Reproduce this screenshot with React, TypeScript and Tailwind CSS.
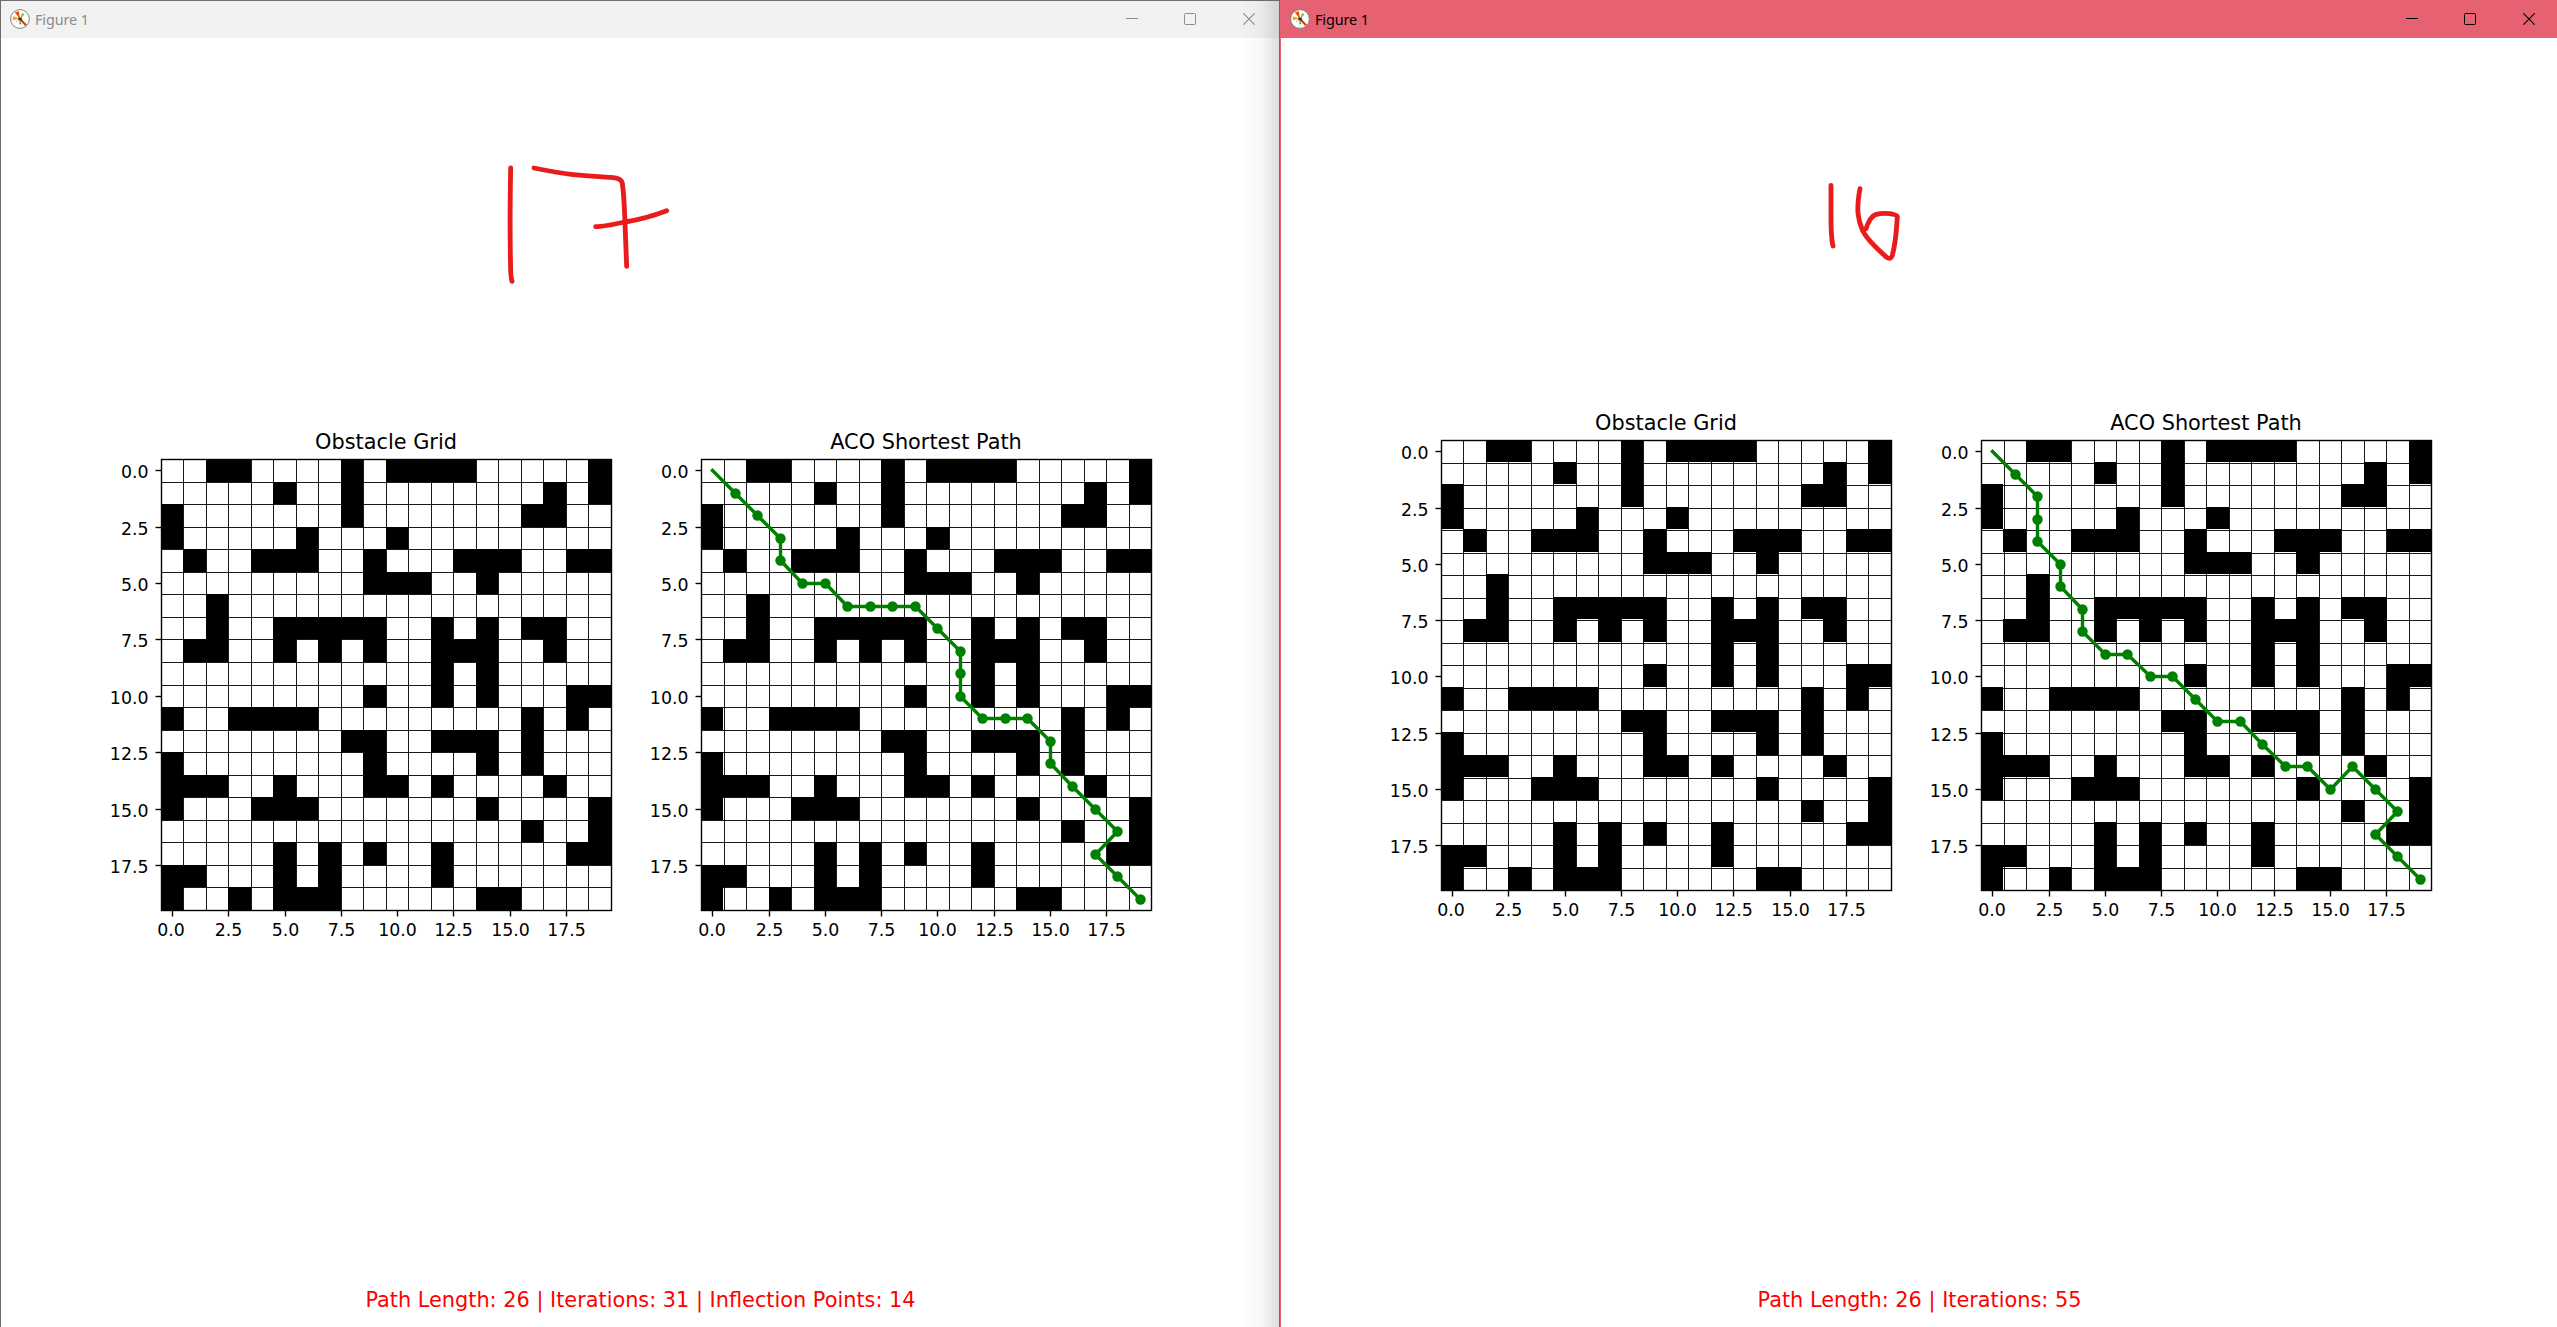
const OBSTACLES: number[][] = [
  [2, 3, 8, 10, 11, 12, 13, 19],
  [5, 8, 17, 19],
  [0, 8, 16, 17],
  [0, 6, 10],
  [1, 4, 5, 6, 9, 13, 14, 15, 18, 19],
  [9, 10, 11, 14],
  [2],
  [2, 5, 6, 7, 8, 9, 12, 14, 16, 17],
  [1, 2, 5, 7, 9, 12, 13, 14, 17],
  [12, 14],
  [9, 12, 14, 18, 19],
  [0, 3, 4, 5, 6, 16, 18],
  [8, 9, 12, 13, 14, 16],
  [0, 9, 14, 16],
  [0, 1, 2, 5, 9, 10, 12, 17],
  [0, 4, 5, 6, 14, 19],
  [16, 19],
  [5, 7, 9, 12, 18, 19],
  [0, 1, 5, 7, 12],
  [0, 3, 5, 6, 7, 14, 15],
];

type Point = [number, number];
type Scale = { base: number; step: number };

const PATH_31: Point[] = [
  [0, 0], [1, 1], [2, 2], [3, 3], [3, 4], [4, 5], [5, 5], [6, 6], [7, 6], [8, 6], [9, 6], [10, 7], [11, 8],
  [11, 9], [11, 10], [12, 11], [13, 11], [14, 11], [15, 12], [15, 13], [16, 14], [17, 15], [18, 16], [17, 17],
  [18, 18], [19, 19],
];
const PATH_55: Point[] = [
  [0, 0], [1, 1], [2, 2], [2, 3], [2, 4], [3, 5], [3, 6], [4, 7], [4, 8], [5, 9], [6, 9], [7, 10], [8, 10],
  [9, 11], [10, 12], [11, 12], [12, 13], [13, 14], [14, 14], [15, 15], [16, 14], [17, 15], [18, 16], [17, 17],
  [18, 18], [19, 19],
];

const TICKS = [0, 2.5, 5, 7.5, 10, 12.5, 15, 17.5];
const EDGES = Array.from({ length: 21 }, (_, i) => i);

// Pixel index of grid position k, snapped down to a whole pixel.
const snap = (s: Scale, k: number) => Math.floor(s.base + s.step * k);

const X_GRID: Scale = { base: 61.25, step: 22.5 };
const X_PATH: Scale = { base: 61.5, step: 22.5 };
const X_PATH_CELLS: Scale = { base: 61.4, step: 22.535 };
const Y_LEFT: Scale = { base: 39.5, step: 22.55 };
const Y_RIGHT: Scale = { base: 40.5, step: 22.5 };
const Y_RIGHT_CELLS: Scale = { base: 39.5, step: 22.545 };

function Axes({
  title, xs, ys, cellXs = xs, cellYs = ys, path, titleY, zeroX,
}: {
  title: string; xs: Scale; ys: Scale; cellXs?: Scale; cellYs?: Scale; path?: Point[]; titleY: number; zeroX: number;
}) {
  const l = snap(xs, 0) + 0.5;
  const r = snap(xs, 20) + 0.5;
  const t = snap(ys, 0) + 0.5;
  const b = snap(ys, 20) + 0.5;
  const px = (v: number) => snap(xs, v + 0.5) + 0.5;
  const py = (v: number) => snap(ys, v + 0.5) + 0.5;
  return (
    <svg width="540" height="540" viewBox="0 0 540 540" className="shrink-0 font-['DejaVu_Sans',sans-serif]">
      <g shapeRendering="crispEdges">
        {OBSTACLES.flatMap((cols, row) =>
          cols.map((c) => {
            const x = snap(cellXs, c);
            const y = Math.max(snap(cellYs, row), Math.floor(t));
            const x2 = Math.min(snap(cellXs, c + 1), r);
            const y2 = Math.min(snap(cellYs, row + 1), b);
            return <rect key={`${row}-${c}`} x={x} y={y} width={x2 - x} height={y2 - y} fill="#000" />;
          }),
        )}
      </g>
      <g stroke="#000" strokeWidth="1" strokeOpacity="0.9">
        {EDGES.map((k) => (
          <line key={`v${k}`} x1={snap(xs, k) + 0.5} x2={snap(xs, k) + 0.5} y1={t} y2={b} />
        ))}
        {EDGES.map((k) => (
          <line key={`h${k}`} y1={snap(ys, k) + 0.5} y2={snap(ys, k) + 0.5} x1={l} x2={r} />
        ))}
      </g>
      {path && (
        <g>
          <polyline
            points={path.map(([x, y]) => `${px(x)},${py(y)}`).join(" ")}
            fill="none" stroke="#008000" strokeWidth="3.4" strokeLinejoin="round" strokeLinecap="square"
          />
          {path.slice(1).map(([x, y], i) => (
            <circle key={i} cx={px(x)} cy={py(y)} r="5.2" fill="#008000" />
          ))}
        </g>
      )}
      <rect x={l} y={t} width={r - l} height={b - t} fill="none" stroke="#000" strokeWidth="1.4" />
      <g stroke="#000" strokeWidth="1.4">
        {TICKS.map((v) => (
          <line key={`x${v}`} x1={px(v)} x2={px(v)} y1={b} y2={b + 6} />
        ))}
        {TICKS.map((v) => (
          <line key={`y${v}`} y1={py(v)} y2={py(v)} x1={l - 6} x2={l} />
        ))}
      </g>
      <g fontSize="17.36">
        {TICKS.map((v) => (
          <text key={`xl${v}`} x={v === 0 ? zeroX : px(v)} y="516" textAnchor="middle">{v.toFixed(1)}</text>
        ))}
        {TICKS.map((v) => (
          <text key={`yl${v}`} x="48.5" y={py(v) + 7} textAnchor="end">{v.toFixed(1)}</text>
        ))}
      </g>
      <text x="286" y={titleY} fontSize="20.83" textAnchor="middle">{title}</text>
    </svg>
  );
}

function AppIcon() {
  return (
    <svg width="20" height="20" viewBox="0 0 20 20" className="shrink-0">
      <circle cx="10" cy="10" r="9.4" fill="#fff" stroke="#777" strokeWidth="0.9" />
      <path d="M10 10 4.8 3.4 8.8 1.9Z" fill="#e8530e" />
      <path d="M9.6 9.8 2.6 11.2 3 7.4 5.6 8Z" fill="#f5a800" />
      <path d="M10 10 11.8 4.6 14.2 4.2 13.6 6.6Z" fill="#8fc31f" />
      <path d="M10 10 9 15.2 11.4 15.2Z" fill="#4caf50" />
      <path d="M10 10 5.4 12.4 6.8 13.6Z" fill="#d6c9a0" />
      <path d="m10 10 6 6.3" stroke="#c2410c" strokeWidth="2" />
      <path d="m8.6 8.6 3 3M11.6 8.8l-3.2 2" stroke="#2d2d2d" strokeWidth="1.4" />
    </svg>
  );
}

function TitleBar({ active }: { active?: boolean }) {
  return (
    <div
      className={
        active
          ? "flex h-[38px] shrink-0 items-center bg-[#e66172] pl-[10px] text-black"
          : "flex h-[37px] shrink-0 items-center bg-[#f2f2f2] pb-px pl-[9px] text-[#8c8c8c]"
      }
    >
      <AppIcon />
      <span className="ml-[5px] pt-px font-['Noto_Sans',sans-serif] text-[14.4px] leading-5 tracking-[-0.1px]">Figure 1</span>
      <div className={active ? "-mr-[2px] ml-auto flex" : "ml-auto flex"}>
        <span className="flex w-[58px] justify-center">
          <svg width="12" height="12" viewBox="0 0 12 12"><path d="M0 5.5h12" stroke="currentColor" /></svg>
        </span>
        <span className="flex w-[58px] justify-center">
          <svg width="12" height="12" viewBox="0 0 12 12">
            <rect x="0.5" y="0.5" width="11" height="11" rx="1" fill="none" stroke="currentColor" />
          </svg>
        </span>
        <span className="flex w-[60px] justify-center">
          <svg width="12" height="12" viewBox="0 0 12 12">
            <path d="m.3.3 11.4 11.4M11.7.3.3 11.7" stroke="currentColor" strokeWidth="1.1" />
          </svg>
        </span>
      </div>
    </div>
  );
}

function Status({ children }: { children: string }) {
  return (
    <p className="mt-auto h-[39px] pl-px text-center font-['DejaVu_Sans',sans-serif] text-[20.83px] leading-6 whitespace-pre text-[#ff0000]">
      {children}
    </p>
  );
}

export default function App() {
  return (
    <div className="flex h-[1327px] w-[2557px] overflow-hidden bg-white">
      <section className="relative flex w-[1280px] shrink-0 flex-col border-t border-r border-l border-[#6e6c6e]">
        <TitleBar />
        <div className="flex pt-[382px] pl-[99px]">
          <Axes title="Obstacle Grid" xs={X_GRID} ys={Y_LEFT} titleY={29} zeroX={71} />
          <Axes title="ACO Shortest Path" xs={X_PATH} cellXs={X_PATH_CELLS} ys={Y_LEFT} path={PATH_31} titleY={29} zeroX={72} />
        </div>
        <Status>Path Length: 26 | Iterations: 31 | Inflection Points: 14</Status>
        <svg
          width="220" height="160" viewBox="0 0 660 480"
          className="absolute top-[139px] left-[479px]"
          fill="none" stroke="#e81c1c" strokeWidth="14.5" strokeLinecap="round" strokeLinejoin="round"
        >
          <path d="M92 84C90 190 90 310 92 390Q93 415 96 424" />
          <path d="M162 84Q230 98 280 104C320 108 365 111 400 113Q424 115 427 130C432 165 434 220 435 250L440 379" />
          <path d="M347 260Q370 260 435 246Q500 235 560 212" />
        </svg>
        <div className="absolute top-0 right-0 h-full w-10 bg-linear-to-r from-transparent via-black/3 via-55% to-black/13" />
      </section>
      <section className="relative flex min-w-0 grow flex-col">
        <TitleBar active />
        <div className="flex grow flex-col border-l border-[#e66172]">
          <div className="flex pt-[362px] pl-[99px]">
            <Axes title="Obstacle Grid" xs={X_GRID} ys={Y_RIGHT} cellYs={Y_RIGHT_CELLS} titleY={30} zeroX={71} />
            <Axes
              title="ACO Shortest Path" xs={X_PATH} cellXs={X_PATH_CELLS} ys={Y_RIGHT} cellYs={Y_RIGHT_CELLS}
              path={PATH_55} titleY={30} zeroX={72}
            />
          </div>
          <Status>Path Length: 26 | Iterations: 55</Status>
        </div>
        <svg
          width="130" height="120" viewBox="0 0 390 360"
          className="absolute top-[160px] left-[520px]"
          fill="none" stroke="#e81c1c" strokeWidth="14.5" strokeLinecap="round" strokeLinejoin="round"
        >
          <path d="M93 76V170Q93 235 99 258" />
          <path d="M180 86C168 150 174 180 188 212C203 242 235 270 260 292Q272 300 277 286C288 245 290 205 292 170Q289 164 270 161Q245 158 226 164Q210 170 198 206" />
        </svg>
      </section>
    </div>
  );
}
